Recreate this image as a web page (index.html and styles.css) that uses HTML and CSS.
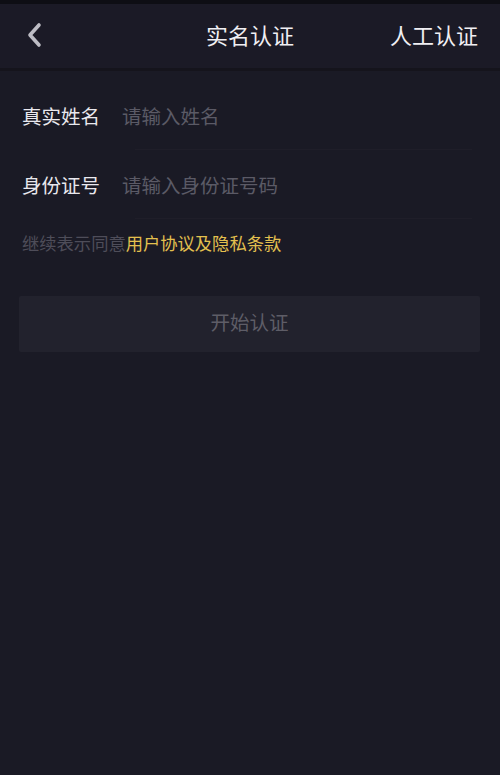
FILE: index.html
```html
<!DOCTYPE html>
<html lang="zh-CN">
<head>
<meta charset="utf-8">
<title>实名认证</title>
<link rel="stylesheet" href="styles.css">
</head>
<body>
<div class="status"></div>
<header class="header">
  <div class="back">
    <svg width="18" height="26" viewBox="0 0 18 26"><path d="M14 3 L5 13 L14 23" fill="none" stroke="#bdbcc4" stroke-width="3.6" stroke-linecap="round" stroke-linejoin="round"/></svg>
  </div>
  <div class="title">实名认证</div>
  <div class="action">人工认证</div>
</header>
<main class="form">
  <div class="row">
    <span class="label">真实姓名</span>
    <span class="placeholder">请输入姓名</span>
  </div>
  <div class="divider"></div>
  <div class="row">
    <span class="label">身份证号</span>
    <span class="placeholder">请输入身份证号码</span>
  </div>
  <div class="divider"></div>
  <p class="agree">继续表示同意<span class="link">用户协议及隐私条款</span></p>
  <div class="btn">开始认证</div>
</main>
</body>
</html>
```
FILE: styles.css
```css
html, body {
  margin: 0;
  padding: 0;
  background: #1a1a25;
  font-family: "Noto Sans CJK SC", "Noto Sans", sans-serif;
  width: 500px;
  height: 775px;
  overflow: hidden;
}
.status {
  height: 4px;
  background: #0e0e14;
}
.header {
  height: 64px;
  display: flex;
  align-items: center;
  justify-content: space-between;
  padding: 0 22px 0 25px;
  position: relative;
  border-bottom: 3px solid #15141c;
  background: #1b1a26;
}
.back {
  width: 18px;
  height: 26px;
  display: flex;
  margin-top: -2px;
}
.title {
  position: absolute;
  left: 0;
  right: 0;
  text-align: center;
  font-size: 22px;
  color: #f0eff3;
  pointer-events: none;
  margin-top: -4px;
}
.action {
  font-size: 22px;
  color: #f0eff3;
  margin-top: -4px;
}
.form {
  padding-top: 10px;
}
.row {
  height: 68px;
  display: flex;
  align-items: center;
  padding-left: 22px;
}
.label {
  font-size: 19.5px;
  color: #e9e8ee;
  width: 100px;
}
.placeholder {
  font-size: 19.5px;
  color: #5b5a66;
}
.divider {
  height: 1px;
  background: #1f1e29;
  margin: 0 28px 0 135px;
}
.agree {
  margin: 12px 0 0 22px;
  font-size: 17.3px;
  line-height: 24px;
  color: #4e4d59;
}
.link {
  color: #e3c04f;
}
.btn {
  margin: 41px 20px 0 19px;
  height: 56px;
  box-sizing: border-box;
  padding-bottom: 6px;
  background: #22222d;
  border-radius: 2px;
  display: flex;
  align-items: center;
  justify-content: center;
  font-size: 19.5px;
  color: #5e5d67;
}
```
